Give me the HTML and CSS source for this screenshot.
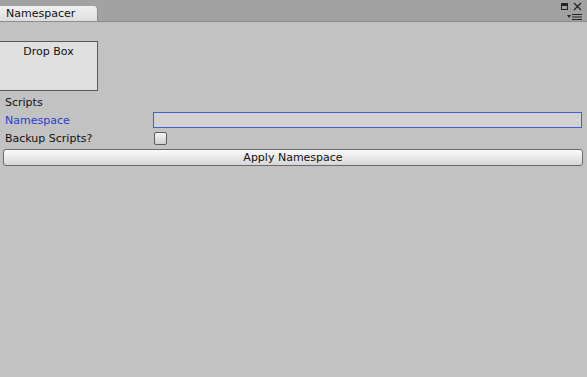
FILE: index.html
```html
<!DOCTYPE html>
<html lang="en">
<head>
  <meta charset="UTF-8">
  <title>Namespacer</title>
  <link rel="stylesheet" href="styles.css">
</head>
<body>
<div class="titlebar">
  <div class="tab">Namespacer</div>
  <div class="win-icons">
    <div class="icon-row">
      <svg width="7" height="7" viewBox="0 0 7 7"><rect x="0.5" y="0.5" width="6" height="6" fill="none" stroke="#222"/><rect x="0" y="0" width="7" height="3" fill="#222"/></svg>
      <svg width="9" height="9" viewBox="0 0 9 9"><path d="M1 1 L8 8 M8 1 L1 8" stroke="#222" stroke-width="1.2"/></svg>
    </div>
    <div class="icon-row">
      <svg width="15" height="6" viewBox="0 0 15 6"><path d="M0 1 L4 1 L2 4 Z" fill="#222"/><path d="M5 0.5 H15 M5 3 H15 M5 5.5 H15" stroke="#222" stroke-width="1"/></svg>
    </div>
  </div>
</div>

<div class="content">
  <div class="drop-box">Drop Box</div>

  <div class="row">
    <span class="label">Scripts</span>
  </div>
  <div class="row">
    <span class="label label-focus">Namespace</span>
    <input class="text-field" type="text">
  </div>
  <div class="row">
    <span class="label">Backup Scripts?</span>
    <span class="checkbox"></span>
  </div>
  <button class="apply-btn">Apply Namespace</button>
</div>
</body>
</html>
```

FILE: styles.css
```css
body{
  margin: 0;
  background: #c2c2c2;
  font-family: "DejaVu Sans", "Liberation Sans", sans-serif;
  font-size: 11px;
  color: #111;
  height: 377px;
  overflow: hidden;
}
.titlebar{
  height: 21px;
  background: #a2a2a2;
  border-bottom: 1px solid #8c8c8c;
  display: flex;
  align-items: flex-end;
  justify-content: space-between;
}
.tab{
  width: 91px;
  height: 15px;
  line-height: 15px;
  padding-left: 6px;
  background: linear-gradient(#f0f0f0, #dedede);
  border-right: 1px solid #8a8a8a;
  border-radius: 0 4px 0 0;
  box-sizing: content-box;
}
.win-icons{
  align-self: stretch;
  display: flex;
  flex-direction: column;
  align-items: flex-end;
  padding: 2px 5px 0 0;
}
.icon-row{
  display: flex;
  align-items: center;
  gap: 5px;
  height: 10px;
}
.icon-row + .icon-row{
  margin-top: 2px;
}
.content{
  padding-top: 19px;
}
.drop-box{
  width: 97px;
  height: 45px;
  background: #e0e0e0;
  border: 1px solid #585858;
  border-left: none;
  text-align: center;
  padding-top: 3px;
  box-sizing: content-box;
  margin-bottom: 2px;
}
.row{
  display: flex;
  align-items: center;
  height: 18px;
  padding-left: 5px;
}
.label{
  width: 148px;
  flex: none;
}
.label-focus{
  color: #1f3fd0;
}
.text-field{
  flex: 1;
  margin: 0 5px 0 0;
  height: 16px;
  box-sizing: border-box;
  border: 1px solid #4a5fd6;
  background: #d2d2d2;
  outline: none;
  padding: 0;
}
.checkbox{
  width: 11px;
  height: 11px;
  margin-left: 1px;
  border: 1px solid #5c5c5c;
  border-radius: 2px;
  background: linear-gradient(#f4f4f4, #d0d0d0);
}
.apply-btn{
  display: block;
  width: 580px;
  height: 17px;
  margin: 2px 0 0 3px;
  padding: 0;
  border: 1px solid #6a6a6a;
  border-radius: 3px;
  background: linear-gradient(#fbfbfb, #d6d6d6);
  font-family: inherit;
  font-size: 11px;
  color: #111;
}
```
